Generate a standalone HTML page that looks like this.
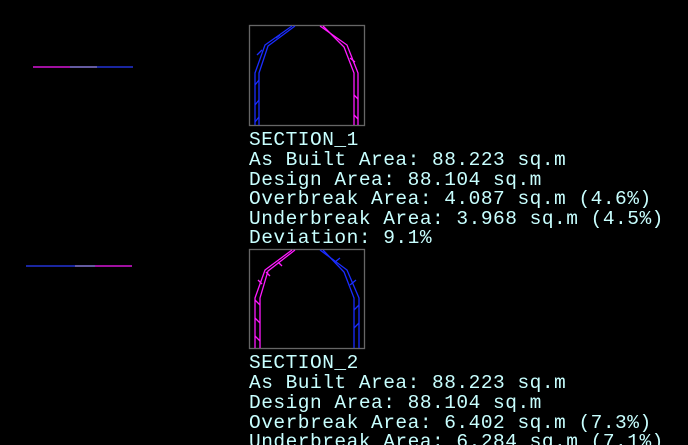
<!DOCTYPE html>
<html><head><meta charset="utf-8"><style>
html,body{margin:0;padding:0;background:#000;width:688px;height:445px;overflow:hidden;position:relative}
.t{position:absolute;left:249px;font-family:"Liberation Mono","DejaVu Sans Mono",monospace;font-size:19.5px;letter-spacing:0.5px;color:#c8ffff;white-space:pre;line-height:19px}
svg{position:absolute;left:0;top:0}
</style></head><body>
<svg width="688" height="445" fill="none" stroke-width="1.3">
<rect x="249.5" y="25.5" width="115" height="100" stroke="#666"/>
<polyline points="292,26 265,45 255,73 255,125" stroke="#1a2cff"/>
<polyline points="295,26 268,46 259,73 259,125" stroke="#1a2cff"/>
<path d="M255,85 L259,80 M255,105 L259,100 M255,122 L259,117 M257,55 L262,50 M276,38 L280,35" stroke="#1a2cff"/>
<polyline points="320,26 347,45 358,73 358,125" stroke="#ff1aff"/>
<polyline points="323,26 344,47 354,73 354,125" stroke="#ff1aff"/>
<path d="M354,95 L358,99 M354,115 L358,119 M350,58 L355,62" stroke="#ff1aff"/>
<line x1="33" y1="67" x2="70" y2="67" stroke="#ff1aff"/>
<line x1="70" y1="67" x2="97" y2="67" stroke="#a090ff"/>
<line x1="97" y1="67" x2="133" y2="67" stroke="#2a3cff"/>

<rect x="249.5" y="249.5" width="115" height="99" stroke="#666"/>
<polyline points="292,250 265,270 255,298 255,348" stroke="#ff1aff"/>
<polyline points="295,250 268,271 260,298 260,348" stroke="#ff1aff"/>
<path d="M255,300 L260,305 M255,318 L260,323 M255,336 L260,341 M258,280 L262,284 M266,272 L270,276 M278,262 L282,266" stroke="#ff1aff"/>
<polyline points="320,250 347,270 359,298 359,348" stroke="#1a2cff"/>
<polyline points="323,250 344,272 354,298 354,348" stroke="#1a2cff"/>
<path d="M354,310 L359,305 M354,328 L359,323 M350,285 L356,280 M335,262 L340,258" stroke="#1a2cff"/>
<line x1="26" y1="266" x2="75" y2="266" stroke="#2a3cff"/>
<line x1="75" y1="266" x2="95" y2="266" stroke="#a090ff"/>
<line x1="95" y1="266" x2="132" y2="266" stroke="#ff1aff"/>
</svg>
<div class="t" style="top:131px">SECTION_1</div>
<div class="t" style="top:151px">As Built Area: 88.223 sq.m</div>
<div class="t" style="top:171px">Design Area: 88.104 sq.m</div>
<div class="t" style="top:190px">Overbreak Area: 4.087 sq.m (4.6%)</div>
<div class="t" style="top:210px">Underbreak Area: 3.968 sq.m (4.5%)</div>
<div class="t" style="top:229px">Deviation: 9.1%</div>
<div class="t" style="top:354px">SECTION_2</div>
<div class="t" style="top:374px">As Built Area: 88.223 sq.m</div>
<div class="t" style="top:394px">Design Area: 88.104 sq.m</div>
<div class="t" style="top:414px">Overbreak Area: 6.402 sq.m (7.3%)</div>
<div class="t" style="top:433px">Underbreak Area: 6.284 sq.m (7.1%)</div>
</body></html>
